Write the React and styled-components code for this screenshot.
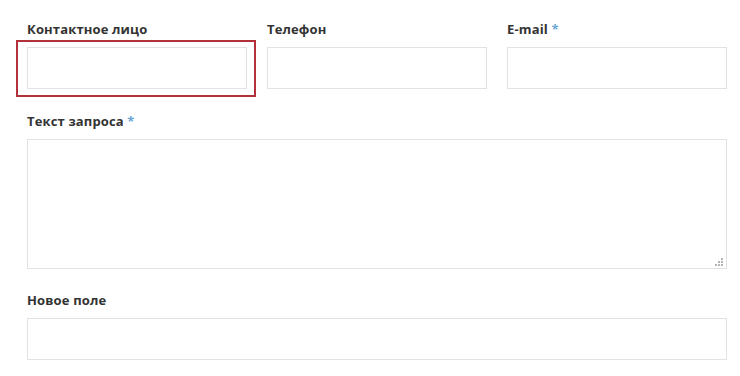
import React from "react";
import styled, { createGlobalStyle } from "styled-components";

const Global = createGlobalStyle`
  html, body { margin: 0; padding: 0; background: #fff; }
  body { font-family: "Open Sans", "Liberation Sans", sans-serif; }
  * { box-sizing: border-box; }
`;

const Form = styled.form`
  padding: 20px 0 0 27px;
  width: 727px;
  display: flex;
  flex-direction: column;
  gap: 23px;
`;

const Row = styled.div`
  display: grid;
  grid-template-columns: repeat(3, 220px);
  column-gap: 20px;
`;

const Field = styled.div`
  position: relative;
  display: flex;
  flex-direction: column;
  gap: 9px;
  margin-top: ${(p) => (p.$pull ? "-1px" : "0")};
  ${(p) =>
    p.$selected &&
    `
    &::after {
      content: "";
      position: absolute;
      left: -11px;
      right: -9px;
      top: 20px;
      bottom: -8px;
      border: 2px solid #b3313a;
      pointer-events: none;
    }
  `}
`;

const Label = styled.label`
  font-size: 13px;
  line-height: 18px;
  font-weight: 700;
  letter-spacing: 0.15px;
  color: #333;
`;

const Star = styled.span`
  color: #6aa6d6;
`;

const Input = styled.input`
  height: 42px;
  width: 100%;
  border: 1px solid #e2e2e2;
  background: #fff;
  font: inherit;
  outline: none;
`;

const AreaWrap = styled.div`
  position: relative;
  height: 130px;
`;

const Area = styled.textarea`
  display: block;
  width: 100%;
  height: 100%;
  border: 1px solid #e2e2e2;
  resize: none;
  font: inherit;
  outline: none;
`;

const Grip = styled.svg`
  position: absolute;
  right: 4px;
  bottom: 3px;
  width: 8px;
  height: 8px;
  pointer-events: none;
`;

const ResizeGrip = () => (
  <Grip viewBox="0 0 8 8">
    <g fill="#b5b5b5">
      <rect x="6" y="0" width="2" height="2" />
      <rect x="3" y="3" width="2" height="2" />
      <rect x="6" y="3" width="2" height="2" />
      <rect x="0" y="6" width="2" height="2" />
      <rect x="3" y="6" width="2" height="2" />
      <rect x="6" y="6" width="2" height="2" />
    </g>
  </Grip>
);

export default function App() {
  return (
    <>
      <Global />
      <Form>
        <Row>
          <Field $selected>
            <Label>Контактное лицо</Label>
            <Input />
          </Field>
          <Field>
            <Label>Телефон</Label>
            <Input />
          </Field>
          <Field>
            <Label>
              E-mail <Star>*</Star>
            </Label>
            <Input />
          </Field>
        </Row>
        <Field>
          <Label>
            Текст запроса <Star>*</Star>
          </Label>
          <AreaWrap>
            <Area />
            <ResizeGrip />
          </AreaWrap>
        </Field>
        <Field $pull>
          <Label>Новое поле</Label>
          <Input />
        </Field>
      </Form>
    </>
  );
}
